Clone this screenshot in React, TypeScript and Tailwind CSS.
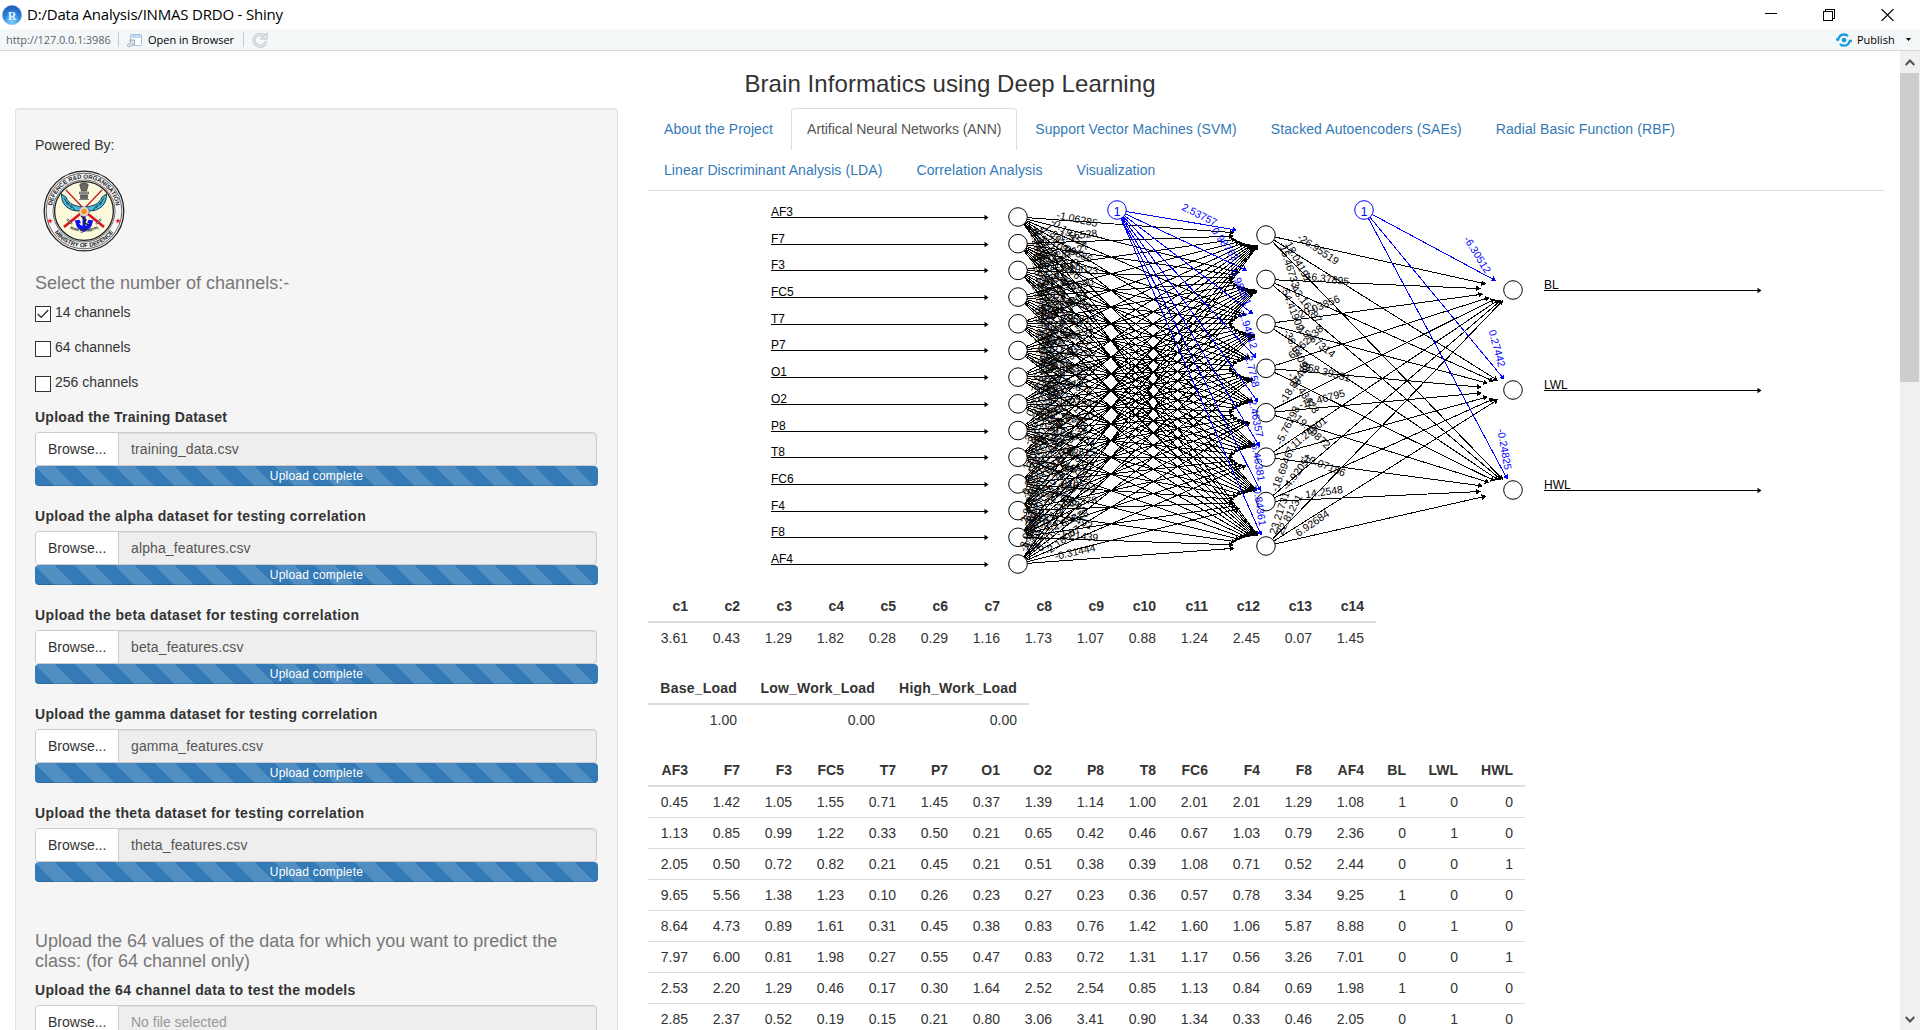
import React from "react";

type Point = { x: number; y: number };

const INPUTS = ["AF3", "F7", "F3", "FC5", "T7", "P7", "O1", "O2", "P8", "T8", "FC6", "F4", "F8", "AF4"];
const OUTPUTS = ["BL", "LWL", "HWL"];

const inputNodes: Point[] = INPUTS.map((_, i) => ({ x: 1018, y: 217 + (i * 347) / 13 }));
const hiddenNodes: Point[] = Array.from({ length: 8 }, (_, i) => ({ x: 1266, y: 235 + (i * 311) / 7 }));
const outputNodes: Point[] = OUTPUTS.map((_, i) => ({ x: 1513, y: 290 + i * 100 }));
const biasHidden: Point = { x: 1117, y: 210 };
const biasOutput: Point = { x: 1364, y: 210 };

const HIDDEN_WEIGHTS: string[][] = [
  ["-26.95519", "18.04191", "-15.46733"],
  ["-16.37895", "-43.16787", "-54.41909"],
  ["20.03856", "-15.67314", "-36.54093"],
  ["65.62838", "-358.39331", "-18.43423"],
  ["-18.84485", "-18.46795", "19.19872"],
  ["-5.76298", "11.24901", "-13.07186"],
  ["-18.69467", "-4.92051", "14.2548"],
  ["23.21731", "22.81231", "6.92684"],
];
const HIDDEN_BIAS = ["2.53757", "0.98763", "-0.98551", "-1.94612", "-2.7758", "-2.46357", "-6.46381", "-0.84361"];
const OUTPUT_BIAS = ["-6.30512", "0.27442", "-0.24825"];

const RX = 33;
const RY = 11;

/** Vector from a neuron's centre to the rim on which its arrows stop. */
function rim(a: Point, b: Point): Point {
  const dx = b.x - a.x;
  const dy = b.y - a.y;
  const d = Math.hypot(dx / RX, dy / RY);
  return { x: dx / d, y: dy / d };
}

function tilt(a: Point, b: Point) {
  return Math.atan2((b.y - a.y) * 3, b.x - a.x);
}

function inputWeight(i: number, h: number) {
  if (i === 0 && h === 0) return "-1.06285";
  if (i === 13 && h === 7) return "-0.31444";
  if (i === 12 && h === 7) return "-1.21439";
  const v = Math.abs(Math.sin((i * 8 + h + 1) * 12.9898) * 43758.5453) % 1;
  return `${(i * 3 + h) % 2 ? "-" : ""}${(v * 3.4).toFixed(5)}`;
}

function Arrow({ a, b, color }: { a: Point; b: Point; color: string }) {
  const u = rim(a, b);
  const ex = b.x - u.x;
  const ey = b.y - u.y;
  const angle = (Math.atan2(ey - a.y, ex - a.x) * 180) / Math.PI;
  return (
    <g shapeRendering="crispEdges">
      <line x1={a.x} y1={a.y} x2={ex} y2={ey} stroke={color} strokeWidth={1} />
      <path d="M0.5 0 L-4 -2.8 L-4 2.8 Z" fill={color} transform={`translate(${ex} ${ey}) rotate(${angle})`} />
    </g>
  );
}

function WeightLabel({ a, b, text }: { a: Point; b: Point; text: string }) {
  const u = rim(a, b);
  const t = tilt(a, b);
  const x = a.x + 1.8 * u.x + 5 * Math.sin(t);
  const y = a.y + 3 * u.y - 5 * Math.cos(t);
  return (
    <text transform={`translate(${x} ${y}) rotate(${(t * 180) / Math.PI})`} textAnchor="middle" dy="3.5" fontSize="10.5">
      {text}
    </text>
  );
}

function BiasLabel({ a, b, text }: { a: Point; b: Point; text: string }) {
  const u = rim(a, b);
  const t = tilt(a, b);
  const x = b.x - 2.75 * u.x + 4.5 * Math.sin(t) - 5 * Math.cos(t);
  const y = b.y - 5.5 * u.y - 1.5;
  return (
    <text transform={`translate(${x} ${y}) rotate(${(t * 180) / Math.PI})`} dy="3.5" fontSize="10.5" fill="#0000ff">
      {text}
    </text>
  );
}

function Neuron({ p, color = "#000" }: { p: Point; color?: string }) {
  return <circle cx={p.x} cy={p.y} r={9.3} fill="#fff" stroke={color} strokeWidth={1} />;
}

function Terminal({ x, y, label }: { x: number; y: number; label: string }) {
  const ly = Math.round(y) + 0.5;
  return (
    <g>
      <text x={x} y={ly - 1.5} fontSize="12">
        {label}
      </text>
      <line x1={x} y1={ly} x2={x + 215} y2={ly} stroke="#000" shapeRendering="crispEdges" />
      <path d={`M${x + 217.5} ${ly} l-4 -2.7 v5.4 Z`} />
    </g>
  );
}

function NetworkPlot() {
  return (
    <svg viewBox="648 191 1237 400" className="block h-[400px] w-[1237px]" fontFamily="'Liberation Sans', Arial, sans-serif">
      {INPUTS.map((n, i) => (
        <Terminal key={n} x={771} y={inputNodes[i].y} label={n} />
      ))}
      {OUTPUTS.map((n, i) => (
        <Terminal key={n} x={1544} y={outputNodes[i].y} label={n} />
      ))}
      {inputNodes.map((a, i) => hiddenNodes.map((b, h) => <Arrow key={`${i}-${h}`} a={a} b={b} color="#000" />))}
      {hiddenNodes.map((a, h) => outputNodes.map((b, o) => <Arrow key={`${h}-${o}`} a={a} b={b} color="#000" />))}
      {[...inputNodes, ...hiddenNodes, ...outputNodes].map((p, i) => (
        <Neuron key={i} p={p} />
      ))}
      {inputNodes.map((a, i) =>
        hiddenNodes.map((b, h) => <WeightLabel key={`${i}-${h}`} a={a} b={b} text={inputWeight(i, h)} />),
      )}
      {hiddenNodes.map((a, h) =>
        outputNodes.map((b, o) => <WeightLabel key={`${h}-${o}`} a={a} b={b} text={HIDDEN_WEIGHTS[h][o]} />),
      )}
      {hiddenNodes.map((b, i) => (
        <g key={i}>
          <Arrow a={biasHidden} b={b} color="#0000ff" />
          <BiasLabel a={biasHidden} b={b} text={HIDDEN_BIAS[i]} />
        </g>
      ))}
      {outputNodes.map((b, i) => (
        <g key={i}>
          <Arrow a={biasOutput} b={b} color="#0000ff" />
          <BiasLabel a={biasOutput} b={b} text={OUTPUT_BIAS[i]} />
        </g>
      ))}
      {[biasHidden, biasOutput].map((p, i) => (
        <g key={i}>
          <Neuron p={p} color="#0000ff" />
          <text x={p.x} y={p.y + 5.5} fontSize="12" fill="#0000ff" textAnchor="middle">
            1
          </text>
        </g>
      ))}
    </svg>
  );
}

function Emblem() {
  return (
    <svg viewBox="-41 -41 82 82" className="block size-[82px]" fontFamily="'Liberation Sans', Arial, sans-serif">
      <defs>
        <path id="ringTop" d="M-32 5 A32.4 32.4 0 1 1 32 5" />
        <path id="ringBottom" d="M-36.3 0 A36.3 36.3 0 0 0 36.3 0" />
        <path id="motto" d="M-20 14 Q0 28 20 14" />
      </defs>
      <circle r="39.8" fill="#f4f4f4" stroke="#222" strokeWidth="1.3" />
      <circle r="37.8" fill="none" stroke="#444" strokeWidth="0.8" />
      <circle r="31" fill="none" stroke="#555" strokeWidth="0.8" />
      <circle r="29.4" fill="#fcfadc" stroke="#222" strokeWidth="1.3" />
      <text fontSize="6" fontWeight="bold" fill="#222">
        <textPath href="#ringTop" startOffset="50%" textAnchor="middle">
          DEFENCE R&amp;D ORGANISATION
        </textPath>
      </text>
      <text fontSize="6" fontWeight="bold" fill="#222">
        <textPath href="#ringBottom" startOffset="50%" textAnchor="middle">
          MINISTRY OF DEFENCE
        </textPath>
      </text>
      <path d="M-34 7.3l.8 1.8 1.9.1-1.5 1.2.6 1.9-1.8-1.1-1.8 1.1.6-1.9-1.5-1.2 1.9-.1z" fill="#f02030" />
      <path d="M34 7.3l.8 1.8 1.9.1-1.5 1.2.6 1.9-1.8-1.1-1.8 1.1.6-1.9-1.5-1.2 1.9-.1z" fill="#f02030" />
      <g fill="#666" stroke="#333" strokeWidth="0.6">
        <path d="M-4 -25 q-1 -2 1.5 -2.5 q2.500 -1.500 5 0 q2.500 .5 1.500 2.500 l-1.500 5 h-5z" />
        <path d="M-4.500 -19 h9 v2 h-9z" fill="#aaa" />
        <path d="M-3.500 -16 h7 v3.500 h-7z M-5 -11.500 h10" />
      </g>
      <path d="M-2 -4 C-8 -5 -15 -6 -18 -14 L-22.500 -17 C-23 -7 -16 0 -5 0 Z" fill="#45bfe0" stroke="#123" strokeWidth="0.9" />
      <path d="M2 -4 C8 -5 15 -6 18 -14 L22.500 -17 C23 -7 16 0 5 0 Z" fill="#45bfe0" stroke="#123" strokeWidth="0.9" />
      <path d="M-20 -13 L-16 -6 M-17 -9 L-12 -3 M-13 -6 L-9 -1 M20 -13 L16 -6 M17 -9 L12 -3 M13 -6 L9 -1" stroke="#123" strokeWidth="0.8" />
      <path d="M-18 -21 L4 2 M18 -21 L-4 2" stroke="#c01525" strokeWidth="1.2" />
      <path d="M4 3 L20 16 M-4 3 L-20 16" stroke="#e01020" strokeWidth="2.6" />
      <path d="M12 13 L17 8 M-12 13 L-17 8" stroke="#222" strokeWidth="1.6" />
      <path d="M12 13 L17 8 M-12 13 L-17 8" stroke="#eee" strokeWidth="0.7" />
      <path
        d="M-1.500 5 h3 v10 q3 -1 3.500 -3 l-2 .2 l1.500 -3.500 l5 .8 l-1 2 q-1 7 -8.500 9.500 q-7.500 -2.500 -8.500 -9.500 l-1 -2 l5 -.8 l1.500 3.500 l-2 -.2 q.5 2 3.500 3z"
        fill="#0b10f5"
      />
      <path d="M-3 5 L2 9 L0 12 L5 14" fill="none" stroke="#222" strokeWidth="1.4" />
      <circle cy="0.500" r="5" fill="#ddd" stroke="#555" strokeWidth="0.8" strokeDasharray="2 1" />
      <circle cy="0.500" r="2.800" fill="#ff8c1a" />
      <text fontSize="4" fontWeight="bold" fill="#333" fontFamily="'Noto Sans', sans-serif">
        <textPath href="#motto" startOffset="50%" textAnchor="middle">
          बलस्य मूलं विज्ञानम्
        </textPath>
      </text>
    </svg>
  );
}

function TitleBar() {
  return (
    <header className="flex h-[29px] items-center bg-white pl-0.5 font-['Open_Sans',sans-serif]">
      <svg viewBox="0 0 20 20" className="size-5">
        <defs>
          <radialGradient id="ball" cx="0.5" cy="0.85" r="0.9">
            <stop offset="0" stopColor="#7ed4ff" />
            <stop offset="0.5" stopColor="#2f83dc" />
            <stop offset="1" stopColor="#1a4fb0" />
          </radialGradient>
        </defs>
        <circle cx="10" cy="10" r="9.700" fill="url(#ball)" stroke="#8db8ec" strokeWidth="0.6" />
        <text x="10" y="14.500" fontSize="12" fontWeight="bold" fill="#e8f4ff" textAnchor="middle" fontFamily="'Liberation Serif', serif">
          R
        </text>
      </svg>
      <h1 className="ml-[5px] text-[15px] tracking-[-0.2px] whitespace-nowrap text-black">D:/Data Analysis/INMAS DRDO - Shiny</h1>
      <div className="mr-[26px] ml-auto flex items-center gap-[46px]">
        <svg viewBox="0 0 12 13" className="h-[13px] w-3" shapeRendering="crispEdges">
          <path d="M0 5.500h12" stroke="#000" />
        </svg>
        <svg viewBox="0 0 12 12" className="size-3" fill="none" stroke="#000" shapeRendering="crispEdges">
          <path d="M0.500 2.500h9v9h-9z M2.500 2.500v-2h9v9h-2" />
        </svg>
        <svg viewBox="0 0 13 12" className="h-3 w-[13px]" stroke="#000" strokeWidth="1.100">
          <path d="M0.500 0L12.500 12M12.500 0L0.500 12" />
        </svg>
      </div>
    </header>
  );
}

function ToolBar() {
  return (
    <div className="flex h-[22px] items-center border-b border-[#d3d9db] bg-[#f3f7f8] pl-[6px] font-['Open_Sans',sans-serif] text-[11px] text-black">
      <span className="w-[105px] tracking-[-0.1px] whitespace-nowrap text-[#5f666b]">http://127.0.0.1:3986</span>
      <span className="ml-[7px] h-[15px] w-px bg-[#c6cccf]" />
      <svg viewBox="0 0 16 14" className="ml-[7px] h-3.5 w-4">
        <rect x="4.500" y="1.500" width="11" height="11" rx="1" fill="#fff" stroke="#a9c3dd" />
        <rect x="5" y="2" width="10" height="3" fill="#c3dcf3" />
        <path d="M1 12.500 l4 -4 -1.500 -1.500 h5 v5 l-1.500 -1.500 -4 3.500z" fill="#dfe6ec" stroke="#8e9aa5" strokeWidth="0.8" />
      </svg>
      <span className="ml-1.5 w-[87px] whitespace-nowrap">Open in Browser</span>
      <span className="ml-[8px] h-[15px] w-px bg-[#c6cccf]" />
      <svg viewBox="0 0 16 16" className="ml-2 size-4" fill="none">
        <path d="M12.800 4.500 A6 6 0 1 0 14 9.500" stroke="#b9c2ce" strokeWidth="3" />
        <path d="M12.800 4.500 A6 6 0 1 0 14 9.500" stroke="#e6ebf1" strokeWidth="1.400" />
        <path d="M8.500 7h6.500v-6z" fill="#e6ebf1" stroke="#b9c2ce" />
      </svg>
      <svg viewBox="0 0 16 14" className="ml-auto h-3.5 w-4" fill="none" stroke="#1a9be0" strokeWidth="2.300">
        <path d="M0 6.500h2.200C3 3.500 5.500 1.500 8 1.500c1.800 0 3 .6 4 1.800" />
        <path d="M16 7.800h-2.200C13 10.800 10.500 12.700 8 12.700c-1.800 0-3-.6-4-1.800" />
        <circle cx="8" cy="7.100" r="2.400" fill="#1a9be0" stroke="none" />
      </svg>
      <span className="ml-[5px] w-[39px]">Publish</span>
      <svg viewBox="0 0 5 3" className="mr-[9px] ml-[10px] h-[3px] w-[5px]">
        <path d="M0 0h5L2.500 3z" />
      </svg>
    </div>
  );
}

function ScrollBar() {
  return (
    <div className="flex w-5 shrink-0 flex-col items-center bg-[#f0f0f0]">
      <div className="flex h-[22px] w-full items-center justify-center">
        <svg viewBox="0 0 10 7" className="h-[7px] w-2.5" fill="none" stroke="#505050" strokeWidth="2">
          <path d="M0.700 6L5 1.500L9.300 6" />
        </svg>
      </div>
      <div className="h-[309px] w-full border-r border-[#f0f0f0] bg-[#cdcdcd]" />
      <div className="mt-auto flex h-[22px] items-center">
        <svg viewBox="0 0 10 7" className="h-[7px] w-2.5" fill="none" stroke="#505050" strokeWidth="2">
          <path d="M0.700 1L5 5.500L9.300 1" />
        </svg>
      </div>
    </div>
  );
}

function Checkbox({ label, checked }: { label: string; checked?: boolean }) {
  return (
    <label className="mb-[15px] flex h-5 items-start">
      <span className="mt-[3px] flex size-4 items-center justify-center border border-[#333] bg-white">
        {checked && (
          <svg viewBox="0 0 12 10" className="h-2.5 w-3" fill="none" stroke="#222" strokeWidth="1.200">
            <path d="M0.800 5L4.200 8.500L11.200 1" />
          </svg>
        )}
      </span>
      <span className="-mt-px ml-1 leading-5">{label}</span>
    </label>
  );
}

function FileInput({ label, file, tracking = "tracking-[0.35px]" }: { label: string; file?: string; tracking?: string }) {
  return (
    <div className="h-[99px] shrink-0">
      <div className={`mb-[5px] leading-5 font-bold ${tracking}`}>{label}</div>
      <div className="flex h-[34px] w-[562px] overflow-hidden rounded border border-[#ccc] bg-[#eee] leading-8 shadow-[inset_0_1px_1px_rgba(0,0,0,0.075)]">
        <span className="w-[83px] border-r border-[#ccc] bg-white pl-3">Browse...</span>
        <span className={file ? "pl-3 tracking-[0.12px] text-[#555]" : "pl-3 text-[#999]"}>{file ?? "No file selected"}</span>
      </div>
      {file && (
        <div className="h-5 w-[563px] rounded bg-[#337ab7] bg-[linear-gradient(45deg,rgba(255,255,255,0.15)_25%,transparent_25%,transparent_50%,rgba(255,255,255,0.15)_50%,rgba(255,255,255,0.15)_75%,transparent_75%,transparent)] bg-[length:40px_40px] text-center text-xs leading-5 tracking-[0.22px] text-white shadow-[inset_0_-1px_0_rgba(0,0,0,0.15)]">
          Upload complete
        </div>
      )}
    </div>
  );
}

function Sidebar() {
  return (
    <aside className="ml-[15px] flex w-[603px] shrink-0 flex-col rounded-t border border-b-0 border-[#e3e3e3] bg-[#f5f5f5] pt-[26px] pl-[19px] shadow-[inset_0_1px_1px_rgba(0,0,0,0.05)]">
      <p className="leading-5">Powered By:</p>
      <div className="mt-[15px] ml-2 h-[82px]">
        <Emblem />
      </div>
      <h4 className="mt-[21px] text-lg leading-5 text-[#777]">Select the number of channels:-</h4>
      <div className="mt-[10px] h-[104px] shrink-0">
        <Checkbox label="14 channels" checked />
        <Checkbox label="64 channels" />
        <Checkbox label="256 channels" />
      </div>
      <FileInput label="Upload the Training Dataset" file="training_data.csv" tracking="tracking-[0.26px]" />
      <FileInput label="Upload the alpha dataset for testing correlation" file="alpha_features.csv" />
      <FileInput label="Upload the beta dataset for testing correlation" file="beta_features.csv" tracking="tracking-[0.38px]" />
      <FileInput label="Upload the gamma dataset for testing correlation" file="gamma_features.csv" tracking="tracking-[0.33px]" />
      <FileInput label="Upload the theta dataset for testing correlation" file="theta_features.csv" tracking="tracking-[0.38px]" />
      <h4 className="mt-[30px] mb-[9px] w-[562px] text-lg leading-[19.6px] text-[#777]">
        Upload the 64 values of the data for which you want to predict the class: (for 64 channel only)
      </h4>
      <FileInput label="Upload the 64 channel data to test the models" />
    </aside>
  );
}

const TABS = [
  { label: "About the Project", tracking: "tracking-[0.1px]" },
  { label: "Artifical Neural Networks (ANN)", tracking: "tracking-[-0.06px]" },
  { label: "Support Vector Machines (SVM)", tracking: "tracking-[0.05px]" },
  { label: "Stacked Autoencoders (SAEs)", tracking: "tracking-[0.1px]" },
  { label: "Radial Basic Function (RBF)", tracking: "tracking-[0.1px]" },
  { label: "Linear Discriminant Analysis (LDA)", tracking: "tracking-[0.085px]" },
  { label: "Correlation Analysis", tracking: "tracking-[0.12px]" },
  { label: "Visualization", tracking: "tracking-[0.03px]" },
];

function Tabs() {
  return (
    <nav className="flex h-[83px] flex-wrap content-start border-b border-[#ddd]">
      {TABS.map(({ label, tracking }, i) => (
        <a
          key={label}
          className={`mr-0.5 -mb-px h-[42px] rounded-t border border-b-0 px-[15px] py-2.5 leading-5 ${tracking} ${
            i === 1 ? "border-[#ddd] text-[#555]" : "border-transparent text-[#337ab7]"
          }`}
        >
          {label}
        </a>
      ))}
    </nav>
  );
}

function DataTable({
  head,
  rows,
  widths,
  headTracking = "tracking-normal",
}: {
  head: string[];
  rows: string[][];
  widths: number[];
  headTracking?: string;
}) {
  const total = widths.reduce((a, b) => a + b, 0);
  return (
    <table className="mb-5 table-fixed border-separate border-spacing-0 text-right leading-5" style={{ width: total }}>
      <colgroup>
        {widths.map((w, i) => (
          <col key={i} style={{ width: w }} />
        ))}
      </colgroup>
      <thead className={headTracking}>
        <tr>
          {head.map((h) => (
            <th key={h} className="border-b-2 border-[#ddd] py-[5px] pr-3 text-right whitespace-nowrap">
              {h}
            </th>
          ))}
        </tr>
      </thead>
      <tbody>
        {rows.map((r, i) => (
          <tr key={i}>
            {r.map((c, j) => (
              <td key={j} className={i ? "border-t border-[#ddd] py-[5px] pr-3" : "py-[5px] pr-3"}>
                {c}
              </td>
            ))}
          </tr>
        ))}
      </tbody>
    </table>
  );
}

const CHANNELS = ["c1", "c2", "c3", "c4", "c5", "c6", "c7", "c8", "c9", "c10", "c11", "c12", "c13", "c14"];
const CHANNEL_VALUES = "3.61 0.43 1.29 1.82 0.28 0.29 1.16 1.73 1.07 0.88 1.24 2.45 0.07 1.45".split(" ");
const SAMPLES = [
  "0.45 1.42 1.05 1.55 0.71 1.45 0.37 1.39 1.14 1.00 2.01 2.01 1.29 1.08 1 0 0",
  "1.13 0.85 0.99 1.22 0.33 0.50 0.21 0.65 0.42 0.46 0.67 1.03 0.79 2.36 0 1 0",
  "2.05 0.50 0.72 0.82 0.21 0.45 0.21 0.51 0.38 0.39 1.08 0.71 0.52 2.44 0 0 1",
  "9.65 5.56 1.38 1.23 0.10 0.26 0.23 0.27 0.23 0.36 0.57 0.78 3.34 9.25 1 0 0",
  "8.64 4.73 0.89 1.61 0.31 0.45 0.38 0.83 0.76 1.42 1.60 1.06 5.87 8.88 0 1 0",
  "7.97 6.00 0.81 1.98 0.27 0.55 0.47 0.83 0.72 1.31 1.17 0.56 3.26 7.01 0 0 1",
  "2.53 2.20 1.29 0.46 0.17 0.30 1.64 2.52 2.54 0.85 1.13 0.84 0.69 1.98 1 0 0",
  "2.85 2.37 0.52 0.19 0.15 0.21 0.80 3.06 3.41 0.90 1.34 0.33 0.46 2.05 0 1 0",
].map((r) => r.split(" "));
const wide = Array.from({ length: 14 }, () => 52);

export default function App() {
  return (
    <div className="flex h-[1030px] w-[1920px] flex-col overflow-hidden bg-white font-['Liberation_Sans',Arial,sans-serif] text-sm text-[#333]">
      <TitleBar />
      <ToolBar />
      <div className="flex min-h-0 flex-1">
        <div className="flex w-[1900px] flex-col overflow-hidden">
          <h2 className="mt-5 mb-[10px] h-[27px] shrink-0 text-center text-2xl leading-[26px] tracking-[0.08px]">
            Brain Informatics using Deep Learning
          </h2>
          <div className="flex min-h-0 flex-1 overflow-hidden">
            <Sidebar />
            <main className="ml-[30px] w-[1236px] shrink-0">
              <Tabs />
              <NetworkPlot />
              <DataTable head={CHANNELS} rows={[CHANNEL_VALUES]} widths={wide} />
              <DataTable
                head={["Base_Load", "Low_Work_Load", "High_Work_Load"]}
                rows={[["1.00", "0.00", "0.00"]]}
                widths={[101, 138, 142]}
                headTracking="tracking-[0.22px]"
              />
              <DataTable head={[...INPUTS, ...OUTPUTS]} rows={SAMPLES} widths={[...wide, 42, 52, 55]} />
            </main>
          </div>
        </div>
        <ScrollBar />
      </div>
    </div>
  );
}
